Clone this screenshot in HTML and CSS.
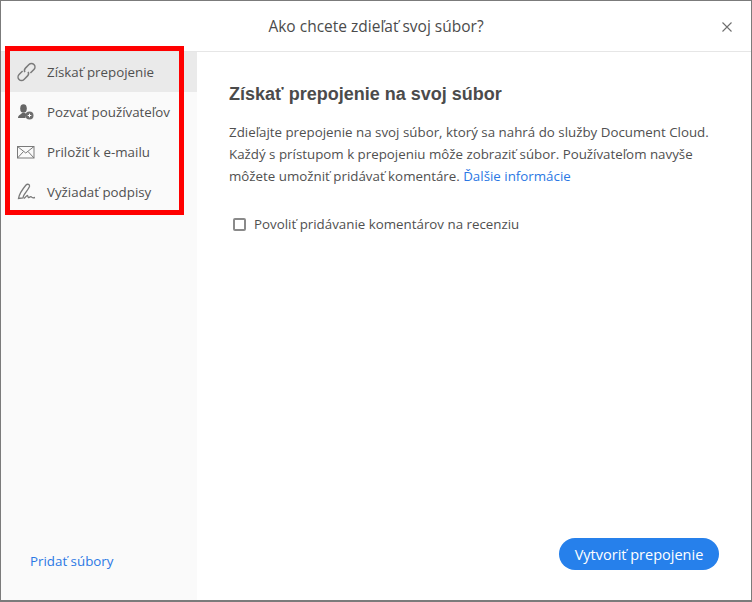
FILE: index.html
```html
<!DOCTYPE html>
<html lang="sk">
<head>
<meta charset="utf-8">
<title>Ako chcete zdieľať svoj súbor?</title>
<link rel="stylesheet" href="styles.css">
</head>
<body>
<div class="dialog">
  <header class="header">
    <h1 class="title">Ako chcete zdieľať svoj súbor?</h1>
    <svg class="close" width="10" height="10" viewBox="0 0 10 10"><path d="M.5.5l9 9M9.500.5l-9 9" stroke="#6e6e6e" stroke-width="1.100" fill="none"/></svg>
  </header>
  <div class="body">
    <aside class="sidebar">
      <nav class="nav">
        <div class="item active">
          <svg class="icon" width="20" height="20" viewBox="0 0 20 20" fill="none" stroke="#7a7a7a" stroke-width="1.500"><g transform="rotate(-45 9.500 10)"><path d="M7.500 6.500H2.500a3.500 3.500 0 0 0 0 7H7.500a3.500 3.500 0 0 0 3.300-2.500"/><path d="M11.500 13.500H16.500a3.500 3.500 0 0 0 0-7H11.500a3.500 3.500 0 0 0-3.300 2.500"/></g></svg>
          <span>Získať prepojenie</span>
        </div>
        <div class="item">
          <svg class="icon" width="20" height="20" viewBox="0 0 20 20"><ellipse cx="6.500" cy="6.500" rx="3.300" ry="4.300" fill="#666"/><path d="M1 16c0-3 3-3.500 4-5h3c1 1 1.500 1 2.500 1.500-1.500 1-2 2-2 3.500z" fill="#666"/><circle cx="12.500" cy="13.500" r="4" fill="#6e6e6e"/><path d="M10.700 13.500h3.600M12.500 11.700v3.600" stroke="#fff" stroke-width="1"/></svg>
          <span>Pozvať používateľov</span>
        </div>
        <div class="item">
          <svg class="icon" width="20" height="20" viewBox="0 0 20 20" fill="none" stroke="#7a7a7a" stroke-width="1"><rect x=".5" y="4.500" width="16.500" height="11.500"/><path d="M.5 4.500l8.250 6.500L17 4.500M.5 16l6-6.500M17 16l-6-6.500"/></svg>
          <span>Priložiť k e-mailu</span>
        </div>
        <div class="item">
          <svg class="icon" width="20" height="20" viewBox="0 0 20 20" fill="none" stroke="#7a7a7a" stroke-width="1.300"><path d="M1.500 16.500C2 13 4 9 9 3c1.500-1.500 4-.5 3.500 1.500C11 8 8 11 6.500 14L6 16z"/><path d="M7 16.500c1.500-1 3-3.500 3.500-3s.5 2.500 1.500 2 2-1.500 2.500-.5 1.500 1 3.500.5"/></svg>
          <span>Vyžiadať podpisy</span>
        </div>
      </nav>
      <a class="add-files">Pridať súbory</a>
    </aside>
    <main class="main">
      <div class="content">
        <h2 class="heading">Získať prepojenie na svoj súbor</h2>
        <p class="text">Zdieľajte prepojenie na svoj súbor, ktorý sa nahrá do služby Document Cloud.<br>Každý s prístupom k prepojeniu môže zobraziť súbor. Používateľom navyše<br>môžete umožniť pridávať komentáre. <a class="link">Ďalšie informácie</a></p>
        <label class="check"><span class="box"></span><span>Povoliť pridávanie komentárov na recenziu</span></label>
      </div>
      <div class="actions"><button class="primary">Vytvoriť prepojenie</button></div>
    </main>
  </div>
  <div class="highlight"></div>
</div>
</body>
</html>
```
FILE: styles.css
```css
* { box-sizing: border-box; }
html, body { margin: 0; padding: 0; }
body { width: 752px; height: 602px; overflow: hidden; font-family: "Open Sans", sans-serif; color: #4b4b4b; background: #fff; }
.dialog { position: relative; width: 752px; height: 602px; border: 1px solid #7b7b7b; border-bottom-width: 2px; display: flex; flex-direction: column; }
.header { flex: none; height: 51px; border-bottom: 1px solid #e6e6e6; display: flex; align-items: center; justify-content: center; position: relative; }
.title { margin: 0; font-size: 15.500px; font-weight: 400; color: #4b4b4b; }
.close { position: absolute; right: 19px; top: 21px; }
.body { flex: 1; display: flex; min-height: 0; }
.sidebar { flex: none; width: 196px; background: #fafafa; display: flex; flex-direction: column; justify-content: space-between; }
.nav { display: flex; flex-direction: column; }
.item { height: 40px; display: flex; align-items: center; gap: 10px; padding-left: 16px; font-size: 13.330px; color: #505050; }
.item.active { background: #eaeaea; }
.icon { flex: none; }
.add-files { font-size: 13.330px; color: #2b78e4; padding: 0 0 30px 29px; }
.main { flex: 1; display: flex; flex-direction: column; justify-content: space-between; padding: 29px 32px 30px 32px; }
.heading { margin: 0 0 14px; font-family: "Liberation Sans", sans-serif; font-size: 18px; font-weight: 700; color: #4b4b4b; line-height: 26px; }
.text { margin: 0 0 28px; font-size: 13.330px; line-height: 22px; color: #505050; white-space: nowrap; }
.link { color: #2b78e4; }
.check { display: flex; align-items: center; gap: 8px; padding-left: 4px; font-size: 13.330px; color: #505050; }
.box { width: 13px; height: 13px; border: 2px solid #8a8a8a; border-radius: 2px; background: #fff; }
.actions { display: flex; justify-content: flex-end; }
.primary { height: 32px; width: 160px; border: 0; border-radius: 16px; background: #2680eb; color: #fff; font-family: inherit; font-size: 14.500px; padding: 0; }
.highlight { position: absolute; left: 4px; top: 45px; width: 179px; height: 169px; border: 5px solid #ff0000; pointer-events: none; }
```
